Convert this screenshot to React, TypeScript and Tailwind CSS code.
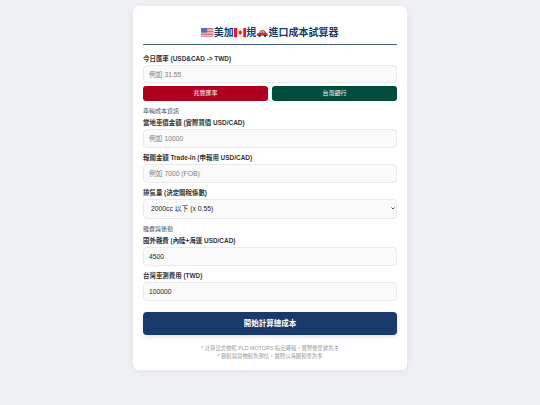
const font = "font-['Liberation_Sans','Noto_Sans_CJK_TC',sans-serif]";

function Flag({ type }: { type: "us" | "ca" }) {
  if (type === "us") {
    return (
      <svg viewBox="0 0 16 12" className="w-[12.4px] h-[9.3px] inline-block">
        <rect width="16" height="12" fill="#f3eeee" />
        {[0, 2, 4, 6, 8, 10].map((y) => (
          <rect key={y} y={y} width="16" height="1" fill="#c8505f" />
        ))}
        <rect width="8" height="6" fill="#5f6f9f" />
      </svg>
    );
  }
  return (
    <svg viewBox="0 0 16 12" className="w-[12.4px] h-[9.3px] inline-block">
      <rect width="16" height="12" fill="#f5eeee" />
      <rect width="4" height="12" fill="#d8202f" />
      <rect x="12" width="4" height="12" fill="#d8202f" />
      <path d="M8 2.5l1 1.8 1-.4-.4 2 1-.2-.6 1.5-1.5.4V9H7.5V7.6L6 7.2l-.6-1.5 1 .2L6 3.9l1 .4z" fill="#d8202f" />
    </svg>
  );
}

function Car() {
  return (
    <svg viewBox="0 0 16 12" className="w-[12.4px] h-[9.3px] inline-block">
      <path d="M1 8.5C1 6.8 2.6 6.2 4 6l1.6-2.4C6 3 6.6 3 7.2 3h2.6c.6 0 1.1.2 1.5.7L13 6c1.2.2 2.2.9 2.2 2.5V10H1z" fill="#c8373f" />
      <path d="M6.3 4h1.6v2H5.2zM8.6 4h1.4l1.4 2H8.6z" fill="#a9c6da" />
      <circle cx="4.5" cy="10" r="1.6" fill="#333" />
      <circle cx="11.8" cy="10" r="1.6" fill="#333" />
    </svg>
  );
}

function Field({ label, placeholder, value, cls }: { label: string; placeholder?: string; value?: string; cls: string }) {
  return (
    <div className={cls}>
      <label className="block text-[6.45px] leading-[9px] font-bold text-[#333] mb-[2px]">{label}</label>
      <input
        readOnly
        placeholder={placeholder}
        value={value ?? ""}
        className="block w-full h-[18.4px] px-[5px] text-[6.75px] text-[#222] placeholder:text-[#808080] bg-[#fafafa] border border-[#eaeaea] rounded-[4px] outline-none"
      />
    </div>
  );
}

export default function App() {
  return (
    <div className={`${font} w-[540px] h-[405px] bg-[#eef0f4] pt-[6px] overflow-hidden`}>
      <div className="mx-auto w-[274px] h-[364px] bg-white rounded-[6px] shadow-[0_2px_8px_rgba(0,0,0,0.06)] px-[10px] pt-[20px]">
        <h1 className="flex items-center justify-center h-[14px] text-[10px] font-bold text-[#1a3a6b] leading-[14px]">
          <Flag type="us" />
          <span>美加</span>
          <Flag type="ca" />
          <span>規</span>
          <Car />
          <span>進口成本試算器</span>
        </h1>
        <div className="h-px bg-[#1a3a6b] mt-[4px] opacity-80" />

        <Field cls="mt-[9px]" label="今日匯率 (USD&CAD -> TWD)" placeholder="例如 31.55" />
        <div className="flex gap-[4px] mt-[2.3px]">
          <button className="flex-1 h-[15px] bg-[#b00020] text-white text-[6px] rounded-[3px]">兆豐匯率</button>
          <button className="flex-1 h-[15px] bg-[#004d40] text-white text-[6px] rounded-[3px]">台灣銀行</button>
        </div>

        <div className="mt-[6.5px] text-[6px] leading-[9px] text-[#555]">車輛成本資訊</div>
        <Field cls="mt-[2.1px]" label="當地車價金額 (實際買價 USD/CAD)" placeholder="例如 10000" />
        <Field cls="mt-[5.6px]" label="報關金額 Trade-In (申報用 USD/CAD)" placeholder="例如 7000 (FOB)" />
        <div className="mt-[5.6px]">
          <label className="block text-[6.45px] leading-[9px] font-bold text-[#333] mb-[2px]">排氣量 (決定關稅係數)</label>
          <div className="relative">
            <select className="block w-full h-[19.7px] pl-[7px] pr-[12px] appearance-none text-[6.8px] text-[#222] bg-[#fafafa] border border-[#eaeaea] rounded-[4px] outline-none">
              <option>2000cc 以下 (x 0.55)</option>
            </select>
            <svg viewBox="0 0 8 6" className="absolute right-[2.5px] top-[8px] w-[4px] h-[3px]">
              <path d="M1 1l3 3 3-3" fill="none" stroke="#222" strokeWidth="1.6" />
            </svg>
          </div>
        </div>

        <div className="mt-[5.8px] text-[6px] leading-[9px] text-[#555]">雜費與後勤</div>
        <Field cls="mt-[2.5px]" label="國外雜費 (內陸+海運 USD/CAD)" value="4500" />
        <Field cls="mt-[5.6px]" label="台灣車測費用 (TWD)" value="100000" />

        <button className="block w-full h-[22.7px] mt-[11.6px] bg-[#1a3a6b] text-white text-[7.5px] font-bold rounded-[4px] shadow-[0_2px_4px_rgba(26,58,107,0.15)]">
          開始計算總成本
        </button>
        <p className="mt-[8.7px] text-center text-[5.35px] leading-[8.3px] text-[#999]">
          * 計算公式依照 PLD MOTORS 指定邏輯，實際依單據為主
          <br />* 關稅與貨物稅為預估，實際以海關稅單為準
        </p>
      </div>
    </div>
  );
}
